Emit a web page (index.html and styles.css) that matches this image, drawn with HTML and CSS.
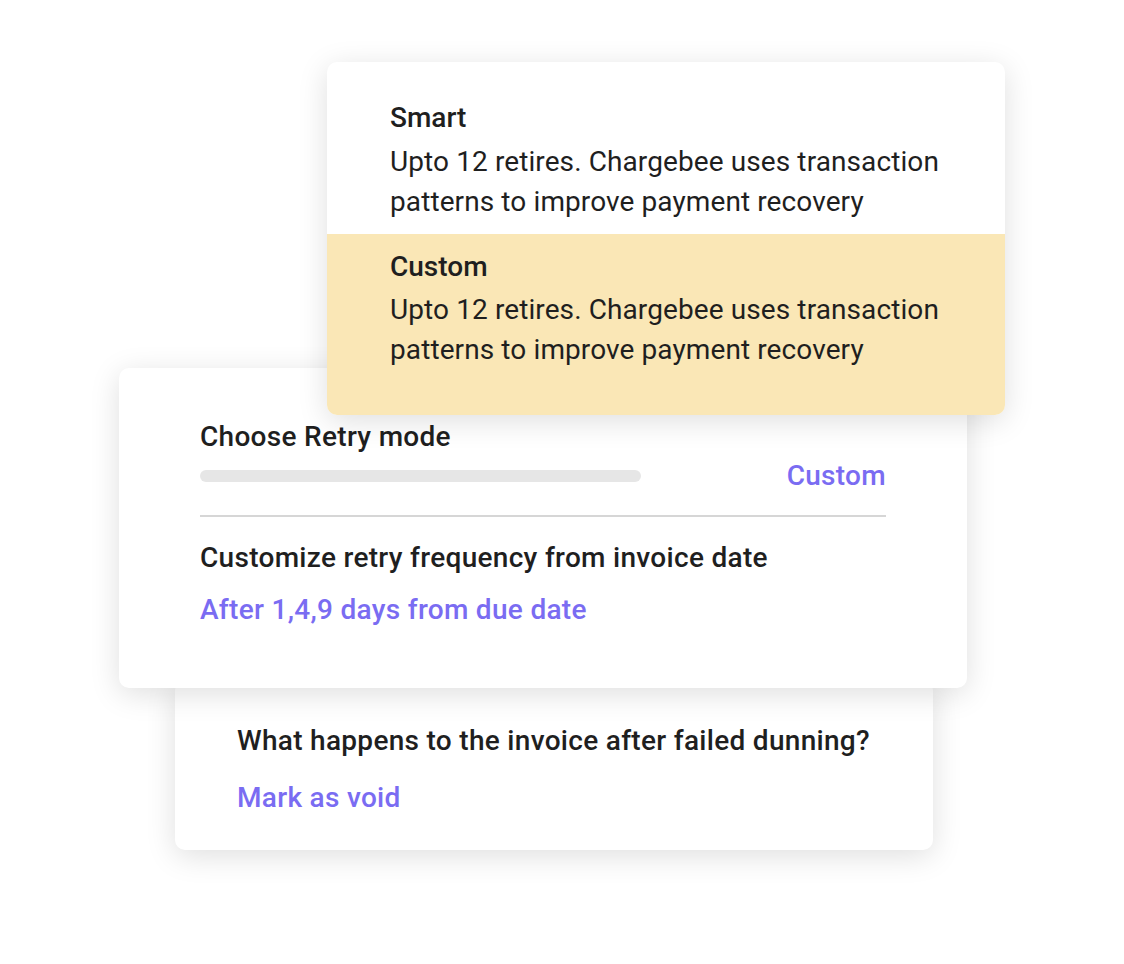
FILE: index.html
```html
<!DOCTYPE html>
<html lang="en">
<head>
    <meta charset="UTF-8">
    <meta name="viewport" content="width=device-width, initial-scale=1.0">
    <title>Dunning settings</title>
    <link rel="stylesheet" href="styles.css">
</head>
<body>
    <div class="stage">
        <!-- retry mode dropdown -->
        <div class="card menu">
            <div class="menu-option">
                <div class="option-title">Smart</div>
                <div class="option-desc">Upto 12 retires. Chargebee uses transaction patterns to improve payment recovery</div>
            </div>
            <div class="menu-option selected">
                <div class="option-title">Custom</div>
                <div class="option-desc">Upto 12 retires. Chargebee uses transaction patterns to improve payment recovery</div>
            </div>
        </div>

        <!-- retry settings -->
        <div class="card retry">
            <div class="field-label">Choose Retry mode</div>
            <div class="mode-row">
                <div class="placeholder-bar"></div>
                <span class="field-value">Custom</span>
            </div>
            <div class="divider"></div>
            <div class="field-label freq-label">Customize retry frequency from invoice date</div>
            <div class="field-value freq-value">After 1,4,9 days from due date</div>
        </div>

        <!-- failed dunning -->
        <div class="card invoice">
            <div class="field-label">What happens to the invoice after failed dunning?</div>
            <div class="field-value void-value">Mark as void</div>
        </div>
    </div>
</body>
</html>
```

FILE: styles.css
```css
body {
    margin: 0;
    background: #ffffff;
    font-family: Roboto, "Noto Sans", "Liberation Sans", sans-serif;
    color: #1f1f1f;
}

.stage {
    width: 1124px;
    height: 964px;
    padding-top: 62px;
    box-sizing: border-box;
}

.card {
    position: relative;
    background: #ffffff;
    border-radius: 10px;
    box-shadow: 0 6px 30px rgba(0, 0, 0, 0.13);
    box-sizing: border-box;
}

/* dropdown */
.menu {
    margin-left: 327px;
    width: 678px;
    overflow: hidden;
    z-index: 3;
}

.menu-option {
    padding: 38px 40px 12px 63px;
}

.menu-option.selected {
    background: #fae7b6;
    padding-top: 15px;
    padding-bottom: 45px;
}

.option-title {
    font-size: 28px;
    font-weight: 500;
    line-height: 36px;
}

.option-desc {
    font-size: 28px;
    line-height: 40px;
    margin-top: 6px;
    max-width: 570px;
    letter-spacing: 0.1px;
}

.menu-option.selected .option-desc {
    margin-top: 5px;
}

/* retry card */
.retry {
    margin-left: 119px;
    margin-top: -47px;
    width: 848px;
    height: 320px;
    padding: 51px 81px 0 81px;
    z-index: 2;
}

.field-label {
    font-size: 28px;
    font-weight: 500;
    line-height: 36px;
    letter-spacing: 0.3px;
}

.field-value {
    font-size: 28px;
    font-weight: 500;
    line-height: 36px;
    letter-spacing: 0.3px;
    color: #7a6cf2;
}

.mode-row {
    display: flex;
    align-items: center;
    justify-content: space-between;
    height: 36px;
    margin-top: 3px;
}

.placeholder-bar {
    width: 441px;
    height: 12px;
    border-radius: 6px;
    background: #e6e6e6;
}

.divider {
    height: 2px;
    margin-top: 21px;
    background: #d6d6d6;
}

.freq-label {
    margin-top: 23px;
}

.freq-value {
    margin-top: 16px;
}

/* invoice card */
.invoice {
    margin-left: 175px;
    margin-top: -8px;
    width: 758px;
    padding: 43px 40px 34px 62px;
    z-index: 1;
}

.void-value {
    margin-top: 21px;
}
```
